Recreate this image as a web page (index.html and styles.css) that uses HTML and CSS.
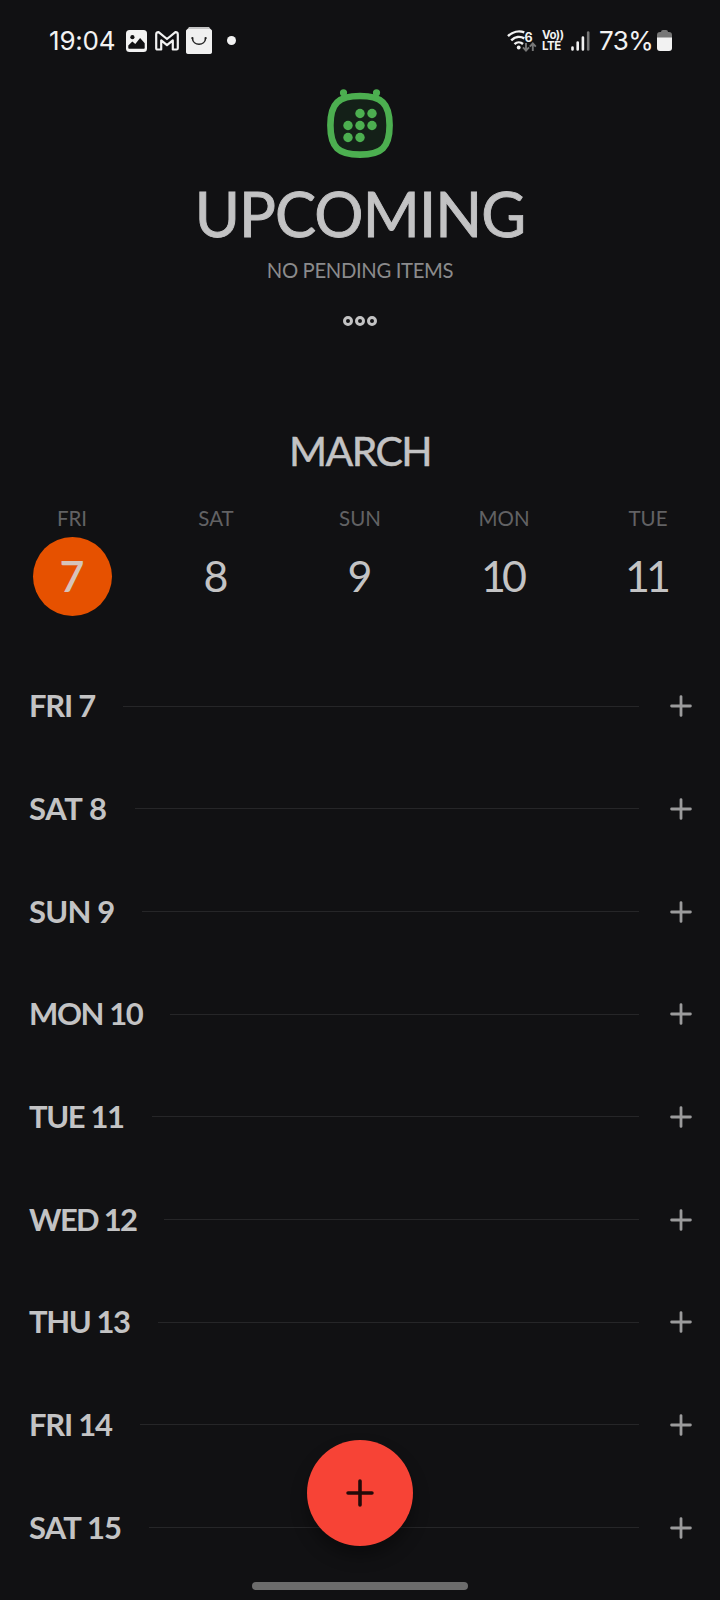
FILE: index.html
```
<!DOCTYPE html>
<html lang="en">
<head>
    <meta charset="UTF-8">
    <meta name="viewport" content="width=device-width, initial-scale=1.0">
    <title>Upcoming</title>
    <link rel="stylesheet" href="styles.css">
</head>
<body>
    <svg class="defs" width="0" height="0">
        <symbol id="plus" viewBox="0 0 22 22">
            <path d="M11 1.6v18.8M1.6 11h18.8" fill="none" stroke="currentColor" stroke-width="2.8" stroke-linecap="round"/>
        </symbol>
    </svg>

    <div class="status-bar">
        <div class="status-left">
            <span class="clock">19:04</span>
            <svg class="icon-image" width="21" height="22" viewBox="0 0 21 22">
                <rect width="21" height="22" rx="3.5" fill="#f2f2f2"/>
                <circle cx="6.4" cy="7.2" r="2.1" fill="#111113"/>
                <path d="M2.3 18v-2.6l4-4 3 2.6 4.8-6 4.6 5.2V18q0 .8-.8.8H3.1q-.8 0-.8-.8z" fill="#111113"/>
            </svg>
            <svg class="icon-mail" width="24" height="20" viewBox="0 0 24 20">
                <path d="M1.2 3.4Q1.2 1 3.6 1.2L12 8l8.4-6.8q2.4-.2 2.4 2.2v13.8q0 1.3-1.3 1.3h-3.7V9.4L12 14.2 6.2 9.4v9.1H2.5q-1.3 0-1.3-1.3z" fill="none" stroke="#f2f2f2" stroke-width="2.2" stroke-linejoin="round"/>
            </svg>
            <svg class="icon-bag" width="26" height="27" viewBox="0 0 26 27">
                <path d="M3 0h20l3 4v20q0 3-3 3H3q-3 0-3-3V4z" fill="#c4c4c4"/>
                <rect y="2" width="26" height="25" rx="2.5" fill="#f0f0f0"/>
                <path d="M6.4 11.2c.6 8 12.6 8 13.2 0" fill="none" stroke="#222" stroke-width="1.6" stroke-linecap="round"/>
                <circle cx="6.4" cy="11" r="1.1" fill="#222"/>
                <circle cx="19.6" cy="11" r="1.1" fill="#222"/>
            </svg>
            <span class="dot"></span>
        </div>
        <div class="status-right">
            <svg class="icon-wifi" width="30" height="24" viewBox="0 0 30 24">
                <g fill="none" stroke="#f2f2f2" stroke-width="2.4">
                    <path d="M1 7.2C5.5 2.6 12 1.4 17.3 3.3"/>
                    <path d="M4.2 11.3C8 7.6 13.2 7 17.3 9.4"/>
                    <path d="M7.5 15.1C10 12.8 13.6 12.8 16 15"/>
                </g>
                <circle cx="11.7" cy="18.5" r="1.9" fill="#f2f2f2"/>
                <text class="wifi-gen" x="17.5" y="12.5">6</text>
                <path d="M19 14v7.4m-3-3 3 3.2 3-3.2M25.800 22v-7.400m-3 3 3-3.200 3 3.200" fill="none" stroke="#777" stroke-width="1.9"/>
            </svg>
            <div class="volte"><span>Vo))</span><span>LTE</span></div>
            <svg class="icon-signal" width="19" height="20" viewBox="0 0 19 20">
                <path d="M1.5 16.500v2M6.700 11.500v7M11.900 6.500v12" stroke="#f2f2f2" stroke-width="2.6" stroke-linecap="round"/>
                <path d="M17.200 1.500v17" stroke="#777" stroke-width="2.6" stroke-linecap="round"/>
            </svg>
            <span class="battery-level">73%</span>
            <svg class="icon-battery" width="15" height="21" viewBox="0 0 15 21">
                <path d="M4 2q0-2 2-2h3q2 0 2 2h1q3 0 3 3v3H0V5q0-3 3-3z" fill="#777"/>
                <path d="M0 7.500h15V18q0 3-3 3H3q-3 0-3-3z" fill="#f2f2f2"/>
            </svg>
        </div>
    </div>

    <header class="header">
        <svg class="logo" width="66" height="70" viewBox="0 0 66 70">
            <circle cx="16.500" cy="3.800" r="3.600" fill="#4caf50"/>
            <circle cx="49.500" cy="3.800" r="3.600" fill="#4caf50"/>
            <path d="M33 7C54.500 7 62.600 14 62.600 36.300S54.500 65.600 33 65.600 3.400 58.600 3.400 36.300 11.500 7 33 7z" fill="#142018" stroke="#4caf50" stroke-width="6.600"/>
            <g fill="#4caf50">
                <circle cx="33" cy="24.500" r="4.700"/>
                <circle cx="45" cy="24.500" r="4.700"/>
                <circle cx="21" cy="36.500" r="4.700"/>
                <circle cx="33" cy="36.500" r="4.700"/>
                <circle cx="45" cy="36.500" r="4.700"/>
                <circle cx="21" cy="48.500" r="4.700"/>
                <circle cx="33" cy="48.500" r="4.700"/>
            </g>
        </svg>
        <h1>UPCOMING</h1>
        <p class="subtitle">NO PENDING ITEMS</p>
        <div class="more"><i></i><i></i><i></i></div>
    </header>

    <section class="week">
        <h2>MARCH</h2>
        <div class="days">
            <div class="day today"><span>FRI</span><b>7</b></div>
            <div class="day"><span>SAT</span><b>8</b></div>
            <div class="day"><span>SUN</span><b>9</b></div>
            <div class="day"><span>MON</span><b>10</b></div>
            <div class="day"><span>TUE</span><b>11</b></div>
        </div>
    </section>

    <main class="agenda">
        <div class="row fri"><h3>FRI 7</h3><hr><svg class="add"><use href="#plus"/></svg></div>
        <div class="row sat"><h3>SAT 8</h3><hr><svg class="add"><use href="#plus"/></svg></div>
        <div class="row sun"><h3>SUN 9</h3><hr><svg class="add"><use href="#plus"/></svg></div>
        <div class="row"><h3>MON 10</h3><hr><svg class="add"><use href="#plus"/></svg></div>
        <div class="row"><h3>TUE 11</h3><hr><svg class="add"><use href="#plus"/></svg></div>
        <div class="row wed"><h3>WED 12</h3><hr><svg class="add"><use href="#plus"/></svg></div>
        <div class="row"><h3>THU 13</h3><hr><svg class="add"><use href="#plus"/></svg></div>
        <div class="row fri"><h3>FRI 14</h3><hr><svg class="add"><use href="#plus"/></svg></div>
        <div class="row sun"><h3>SAT 15</h3><hr><svg class="add"><use href="#plus"/></svg></div>
    </main>

    <div class="fab"><svg><use href="#plus"/></svg></div>
    <div class="home-bar"></div>
</body>
</html>
```
FILE: styles.css
```
* {
    margin: 0;
    padding: 0;
    box-sizing: border-box;
}

body {
    position: relative;
    width: 720px;
    height: 1600px;
    overflow: hidden;
    background: #111113;
    color: #c3c3c4;
    font-family: Lato, "Open Sans", sans-serif;
}

svg {
    display: block;
    flex: none;
}

.defs {
    position: absolute;
}

/* status bar */
.status-bar {
    display: flex;
    justify-content: space-between;
    height: 82px;
    padding: 0 48px 1px 49px;
    color: #f2f2f2;
    font-family: Inter, Roboto, sans-serif;
    font-size: 26px;
}

.status-left,
.status-right {
    display: flex;
    align-items: center;
}

.clock {
    width: 77px;
    letter-spacing: -0.2px;
}

.icon-mail {
    margin-left: 8px;
}

.icon-bag {
    margin-left: 7px;
    margin-bottom: 1px;
}

.dot {
    width: 9px;
    height: 9px;
    margin-left: 15px;
    border-radius: 50%;
    background: #f2f2f2;
}

.wifi-gen {
    fill: #f2f2f2;
    font-size: 12.5px;
    font-weight: 700;
}

.volte {
    display: flex;
    flex-direction: column;
    width: 22px;
    margin-left: 5px;
    font-size: 11.5px;
    font-weight: 700;
    line-height: 11px;
    letter-spacing: -0.5px;
}

.icon-signal {
    margin-left: 7px;
}

.battery-level {
    width: 58px;
    margin-left: 9px;
    letter-spacing: -0.6px;
}

/* header */
.header {
    display: flex;
    flex-direction: column;
    align-items: center;
    height: 344px;
    padding-top: 7px;
}

h1 {
    margin-top: 24px;
    font-size: 61.5px;
    font-weight: 400;
    line-height: 60px;
    letter-spacing: -0.9px;
    -webkit-text-stroke: 0.9px #c3c3c4;
}

.subtitle {
    margin-top: 15px;
    color: #8b8b8c;
    font-size: 20.3px;
    line-height: 24px;
    letter-spacing: -0.35px;
}

.more {
    display: flex;
    gap: 2px;
    margin-top: 34px;
}

.more i {
    width: 10px;
    height: 10px;
    border: 3px solid #c3c3c4;
    border-radius: 50%;
}

/* week strip */
.week {
    height: 229px;
    text-align: center;
}

h2 {
    font-size: 41px;
    font-weight: 400;
    line-height: 50px;
    letter-spacing: -1.6px;
    -webkit-text-stroke: 0.5px #c3c3c4;
}

.days {
    display: grid;
    grid-template-columns: repeat(5, 1fr);
    margin-top: 30px;
}

.day {
    display: flex;
    flex-direction: column;
    align-items: center;
}

.day span {
    color: #626264;
    font-size: 20.5px;
    line-height: 24px;
}

.day b {
    width: 79px;
    height: 79px;
    margin-top: 7px;
    border-radius: 50%;
    font-size: 43px;
    font-weight: 400;
    line-height: 77px;
    letter-spacing: -4px;
    text-indent: -4px;
}

.today b {
    background: #e65100;
    color: #d6c3ba;
    font-weight: 600;
}

/* agenda */
.row {
    display: flex;
    align-items: center;
    height: 102.67px;
    padding: 0 28px 0 29px;
}

h3 {
    padding-bottom: 2px;
    font-size: 31px;
    font-weight: 700;
    line-height: 40px;
    letter-spacing: -1.4px;
}

.fri h3 {
    letter-spacing: -1.25px;
}

.sat h3 {
    letter-spacing: -0.3px;
}

.sun h3 {
    letter-spacing: -0.8px;
}

.wed h3 {
    letter-spacing: -1.7px;
}

.row hr {
    flex: 1;
    height: 1px;
    margin: 0 31px 0 28px;
    border: 0;
    background: #262628;
}

.add {
    width: 22px;
    height: 22px;
    color: #9b9b9c;
}

.fab {
    position: absolute;
    left: 307px;
    top: 1440px;
    display: flex;
    align-items: center;
    justify-content: center;
    width: 106px;
    height: 106px;
    border-radius: 50%;
    background: #f74336;
    box-shadow: 0 10px 16px rgba(0, 0, 0, 0.35);
    color: #220a09;
}

.fab svg {
    width: 28px;
    height: 28px;
}

.home-bar {
    position: absolute;
    left: 252px;
    top: 1582px;
    width: 216px;
    height: 8px;
    border-radius: 4px;
    background: #6c6c6c;
}
```
